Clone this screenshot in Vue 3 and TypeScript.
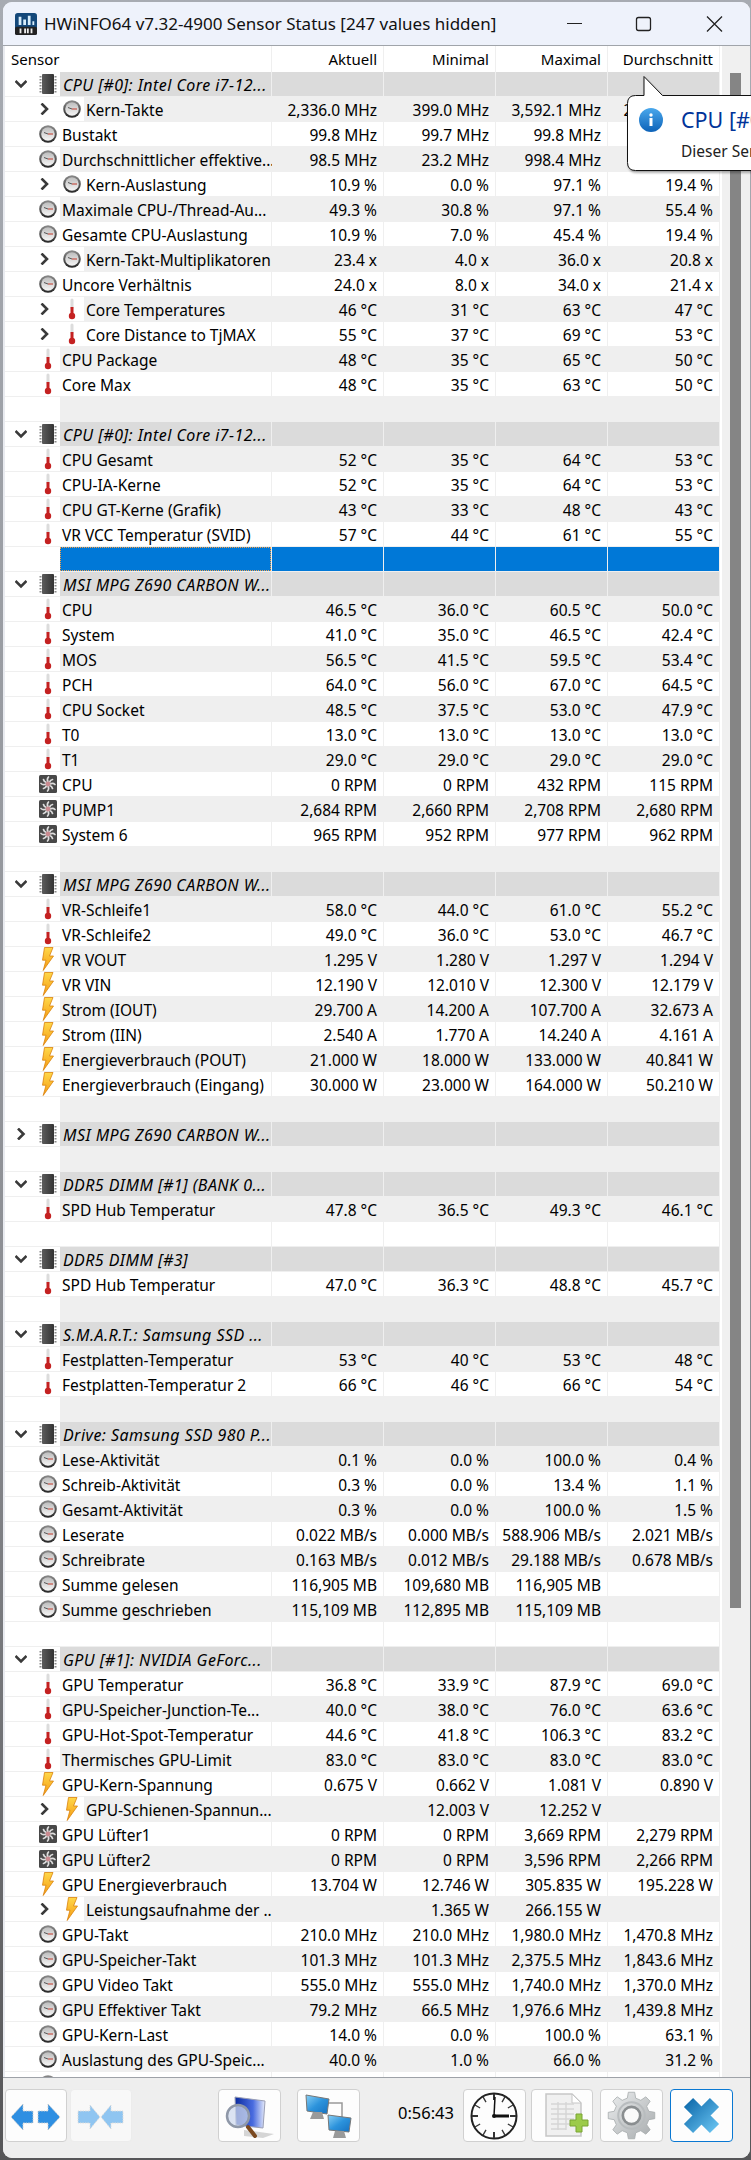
<script setup lang="ts">
type Row = { k: string; n?: string; v?: string[]; x?: boolean; c?: boolean; sel?: boolean }
const vals = (s: string) => s.split('|')
const r = (k: string, n: string, v: string, x = false): Row => ({ k, n, v: vals(v), x })
const h = (n: string, c = false): Row => ({ k: 'h', n, c })
const blank: Row = { k: '' }
const rows: Row[] = [
  h('CPU [#0]: Intel Core i7-12...'),
  r('c', 'Kern-Takte', '2,336.0 MHz|399.0 MHz|3,592.1 MHz|2,120.5 MHz', true),
  r('c', 'Bustakt', '99.8 MHz|99.7 MHz|99.8 MHz|'),
  r('c', 'Durchschnittlicher effektive...', '98.5 MHz|23.2 MHz|998.4 MHz|'),
  r('c', 'Kern-Auslastung', '10.9 %|0.0 %|97.1 %|19.4 %', true),
  r('c', 'Maximale CPU-/Thread-Au...', '49.3 %|30.8 %|97.1 %|55.4 %'),
  r('c', 'Gesamte CPU-Auslastung', '10.9 %|7.0 %|45.4 %|19.4 %'),
  r('c', 'Kern-Takt-Multiplikatoren', '23.4 x|4.0 x|36.0 x|20.8 x', true),
  r('c', 'Uncore Verhältnis', '24.0 x|8.0 x|34.0 x|21.4 x'),
  r('t', 'Core Temperatures', '46 °C|31 °C|63 °C|47 °C', true),
  r('t', 'Core Distance to TjMAX', '55 °C|37 °C|69 °C|53 °C', true),
  r('t', 'CPU Package', '48 °C|35 °C|65 °C|50 °C'),
  r('t', 'Core Max', '48 °C|35 °C|63 °C|50 °C'),
  blank,
  h('CPU [#0]: Intel Core i7-12...'),
  r('t', 'CPU Gesamt', '52 °C|35 °C|64 °C|53 °C'),
  r('t', 'CPU-IA-Kerne', '52 °C|35 °C|64 °C|53 °C'),
  r('t', 'CPU GT-Kerne (Grafik)', '43 °C|33 °C|48 °C|43 °C'),
  r('t', 'VR VCC Temperatur (SVID)', '57 °C|44 °C|61 °C|55 °C'),
  { k: '', sel: true },
  h('MSI MPG Z690 CARBON W...'),
  r('t', 'CPU', '46.5 °C|36.0 °C|60.5 °C|50.0 °C'),
  r('t', 'System', '41.0 °C|35.0 °C|46.5 °C|42.4 °C'),
  r('t', 'MOS', '56.5 °C|41.5 °C|59.5 °C|53.4 °C'),
  r('t', 'PCH', '64.0 °C|56.0 °C|67.0 °C|64.5 °C'),
  r('t', 'CPU Socket', '48.5 °C|37.5 °C|53.0 °C|47.9 °C'),
  r('t', 'T0', '13.0 °C|13.0 °C|13.0 °C|13.0 °C'),
  r('t', 'T1', '29.0 °C|29.0 °C|29.0 °C|29.0 °C'),
  r('f', 'CPU', '0 RPM|0 RPM|432 RPM|115 RPM'),
  r('f', 'PUMP1', '2,684 RPM|2,660 RPM|2,708 RPM|2,680 RPM'),
  r('f', 'System 6', '965 RPM|952 RPM|977 RPM|962 RPM'),
  blank,
  h('MSI MPG Z690 CARBON W...'),
  r('t', 'VR-Schleife1', '58.0 °C|44.0 °C|61.0 °C|55.2 °C'),
  r('t', 'VR-Schleife2', '49.0 °C|36.0 °C|53.0 °C|46.7 °C'),
  r('b', 'VR VOUT', '1.295 V|1.280 V|1.297 V|1.294 V'),
  r('b', 'VR VIN', '12.190 V|12.010 V|12.300 V|12.179 V'),
  r('b', 'Strom (IOUT)', '29.700 A|14.200 A|107.700 A|32.673 A'),
  r('b', 'Strom (IIN)', '2.540 A|1.770 A|14.240 A|4.161 A'),
  r('b', 'Energieverbrauch (POUT)', '21.000 W|18.000 W|133.000 W|40.841 W'),
  r('b', 'Energieverbrauch (Eingang)', '30.000 W|23.000 W|164.000 W|50.210 W'),
  blank,
  h('MSI MPG Z690 CARBON W...', true),
  blank,
  h('DDR5 DIMM [#1] (BANK 0...'),
  r('t', 'SPD Hub Temperatur', '47.8 °C|36.5 °C|49.3 °C|46.1 °C'),
  blank,
  h('DDR5 DIMM [#3]'),
  r('t', 'SPD Hub Temperatur', '47.0 °C|36.3 °C|48.8 °C|45.7 °C'),
  blank,
  h('S.M.A.R.T.: Samsung SSD ...'),
  r('t', 'Festplatten-Temperatur', '53 °C|40 °C|53 °C|48 °C'),
  r('t', 'Festplatten-Temperatur 2', '66 °C|46 °C|66 °C|54 °C'),
  blank,
  h('Drive: Samsung SSD 980 P...'),
  r('c', 'Lese-Aktivität', '0.1 %|0.0 %|100.0 %|0.4 %'),
  r('c', 'Schreib-Aktivität', '0.3 %|0.0 %|13.4 %|1.1 %'),
  r('c', 'Gesamt-Aktivität', '0.3 %|0.0 %|100.0 %|1.5 %'),
  r('c', 'Leserate', '0.022 MB/s|0.000 MB/s|588.906 MB/s|2.021 MB/s'),
  r('c', 'Schreibrate', '0.163 MB/s|0.012 MB/s|29.188 MB/s|0.678 MB/s'),
  r('c', 'Summe gelesen', '116,905 MB|109,680 MB|116,905 MB|'),
  r('c', 'Summe geschrieben', '115,109 MB|112,895 MB|115,109 MB|'),
  blank,
  h('GPU [#1]: NVIDIA GeForc...'),
  r('t', 'GPU Temperatur', '36.8 °C|33.9 °C|87.9 °C|69.0 °C'),
  r('t', 'GPU-Speicher-Junction-Te...', '40.0 °C|38.0 °C|76.0 °C|63.6 °C'),
  r('t', 'GPU-Hot-Spot-Temperatur', '44.6 °C|41.8 °C|106.3 °C|83.2 °C'),
  r('t', 'Thermisches GPU-Limit', '83.0 °C|83.0 °C|83.0 °C|83.0 °C'),
  r('b', 'GPU-Kern-Spannung', '0.675 V|0.662 V|1.081 V|0.890 V'),
  r('b', 'GPU-Schienen-Spannun...', '|12.003 V|12.252 V|', true),
  r('f', 'GPU Lüfter1', '0 RPM|0 RPM|3,669 RPM|2,279 RPM'),
  r('f', 'GPU Lüfter2', '0 RPM|0 RPM|3,596 RPM|2,266 RPM'),
  r('b', 'GPU Energieverbrauch', '13.704 W|12.746 W|305.835 W|195.228 W'),
  r('b', 'Leistungsaufnahme der ...', '|1.365 W|266.155 W|', true),
  r('c', 'GPU-Takt', '210.0 MHz|210.0 MHz|1,980.0 MHz|1,470.8 MHz'),
  r('c', 'GPU-Speicher-Takt', '101.3 MHz|101.3 MHz|2,375.5 MHz|1,843.6 MHz'),
  r('c', 'GPU Video Takt', '555.0 MHz|555.0 MHz|1,740.0 MHz|1,370.0 MHz'),
  r('c', 'GPU Effektiver Takt', '79.2 MHz|66.5 MHz|1,976.6 MHz|1,439.8 MHz'),
  r('c', 'GPU-Kern-Last', '14.0 %|0.0 %|100.0 %|63.1 %'),
  r('c', 'Auslastung des GPU-Speic...', '40.0 %|1.0 %|66.0 %|31.2 %'),
  r('c', '', '|||'),
]
const columns = ['Aktuell', 'Minimal', 'Maximal', 'Durchschnitt']
const empties = ['', '', '', '']

const gearPath = (() => {
  const teeth = 8
  const pts: string[] = []
  for (let i = 0; i < teeth; i++) {
    const a = (i * 2 * Math.PI) / teeth
    const step = (2 * Math.PI) / teeth
    const list: [number, number][] = [
      [17.5, a - step * 0.3],
      [23, a - step * 0.17],
      [23, a + step * 0.17],
      [17.5, a + step * 0.3],
    ]
    for (const [rad, ang] of list) {
      pts.push(`${(25 + rad * Math.cos(ang)).toFixed(1)},${(25 + rad * Math.sin(ang)).toFixed(1)}`)
    }
  }
  return 'M' + pts.join('L') + 'Z'
})()
const ticks = Array.from({ length: 12 }, (_, i) => i * 30)
</script>

<template>
  <div class="desktop">
    <svg class="defs" width="0" height="0" aria-hidden="true">
      <defs>
        <linearGradient id="g-ring" x1="0" y1="0" x2="0" y2="1">
          <stop offset="0" stop-color="#8c8c8c" /><stop offset="1" stop-color="#262626" />
        </linearGradient>
        <linearGradient id="g-face" x1="0" y1="0" x2="0" y2="1">
          <stop offset="0" stop-color="#bdbdbd" /><stop offset="1" stop-color="#f6f6f6" />
        </linearGradient>
        <linearGradient id="g-bolt" x1="0" y1="0" x2="0" y2="1">
          <stop offset="0" stop-color="#ffd84a" /><stop offset="1" stop-color="#f59a12" />
        </linearGradient>
        <linearGradient id="g-chip" x1="0" y1="0" x2="1" y2="0">
          <stop offset="0" stop-color="#5c5c5c" /><stop offset="1" stop-color="#333" />
        </linearGradient>
        <linearGradient id="g-x" x1="0" y1="0" x2="1" y2="1">
          <stop offset="0" stop-color="#1470b0" /><stop offset="1" stop-color="#62bdec" />
        </linearGradient>
        <linearGradient id="g-screen" x1="0" y1="0" x2="1" y2="0">
          <stop offset="0" stop-color="#0a2a9e" /><stop offset="0.6" stop-color="#4a6ce0" /><stop offset="1" stop-color="#e6ebfa" />
        </linearGradient>
        <linearGradient id="g-net" x1="0" y1="0" x2="1" y2="1">
          <stop offset="0" stop-color="#8ad0f5" /><stop offset="0.5" stop-color="#2c93dc" /><stop offset="1" stop-color="#1570c0" />
        </linearGradient>
        <linearGradient id="g-gear" x1="0" y1="0" x2="1" y2="1">
          <stop offset="0" stop-color="#eceeef" /><stop offset="1" stop-color="#a6aaac" />
        </linearGradient>
        <linearGradient id="g-info" x1="0" y1="0" x2="0" y2="1">
          <stop offset="0" stop-color="#4aa8ec" /><stop offset="1" stop-color="#0d62b8" />
        </linearGradient>
        <symbol id="i-c" viewBox="0 0 18 18">
          <circle cx="9" cy="9" r="8.8" fill="url(#g-ring)" />
          <circle cx="9" cy="9" r="6.8" fill="url(#g-face)" />
          <path d="M9 9H14" stroke="#c0392b" stroke-width="1" />
          <path d="M9 9L5 7.5" stroke="#555" stroke-width="1" />
        </symbol>
        <symbol id="i-h" viewBox="0 0 18 22">
          <rect x="3" y="1" width="12" height="20" rx="1" fill="url(#g-chip)" />
          <path d="M1.5 3V20M16.5 3V20" stroke="#8a8a8a" stroke-width="2" stroke-dasharray="1.5 1.5" />
        </symbol>
        <symbol id="i-t" viewBox="0 0 10 22">
          <rect x="3.5" y="0.5" width="3" height="11" rx="1.5" fill="#dcdcdc" />
          <rect x="3.5" y="9" width="3" height="8" fill="#c42121" />
          <circle cx="5" cy="18" r="3.2" fill="#c42121" />
        </symbol>
        <symbol id="i-b" viewBox="0 0 12 24">
          <path d="M2.5 .5H11L7.5 9H11.5L1.2 23.5L4 13.2H.5Z" fill="url(#g-bolt)" stroke="#d9820c" stroke-width=".8" />
        </symbol>
        <symbol id="i-f" viewBox="0 0 18 18">
          <rect width="18" height="18" rx="1.5" fill="#484848" />
          <g fill="none" stroke="#dedede" stroke-width="1.7" stroke-linecap="round">
            <path d="M9 7Q7.5 4 9.5 2M11 9Q14 7.5 16 9.5M9 11Q10.5 14 8.5 16M7 9Q4 10.5 2 8.5" />
            <path d="M10.5 7.5Q11 5 13.5 4.5M10.5 10.5Q13 11 13.5 13.5M7.5 10.5Q7 13 4.5 13.5M7.5 7.5Q5 7 4.5 4.5" />
          </g>
          <circle cx="9" cy="9" r="2.4" fill="#c98a8f" />
        </symbol>
      </defs>
    </svg>

    <div class="window">
      <header class="titlebar">
        <svg class="appicon" width="22" height="22" viewBox="0 0 24 24">
          <rect width="24" height="24" rx="3" fill="#14487a" />
          <rect y="15" width="24" height="9" rx="2" fill="#222" />
          <path d="M4 4h3v9H4zM9 7h3v6H9zM14 3h3v10h-3zM19 9h2v4h-2z" fill="#d8eefc" />
          <path d="M6 17v5M11 17v5M14 17v5M18 17v5" stroke="#eee" stroke-width="2" />
        </svg>
        <span class="title">HWiNFO64 v7.32-4900 Sensor Status [247 values hidden]</span>
        <svg class="winbtns" width="156" height="24" viewBox="0 0 156 24">
          <path d="M0 11.5H15" stroke="#222" stroke-width="1.2" />
          <rect x="69.5" y="5.5" width="14" height="13" rx="2" fill="none" stroke="#222" stroke-width="1.3" />
          <path d="M140 4.5L155 19.5M155 4.5L140 19.5" stroke="#222" stroke-width="1.3" />
        </svg>
      </header>

      <div class="body">
        <div class="list">
          <div class="row head">
            <div class="cell name-cell">Sensor</div>
            <div v-for="c in columns" :key="c" class="cell num">{{ c }}</div>
          </div>
          <div
            v-for="(row, i) in rows"
            :key="i"
            class="row"
            :class="{ odd: i % 2 === 1, group: row.k === 'h', sel: row.sel }"
          >
            <div class="cell first">
              <div class="gutter" :class="{ wide: row.x }">
                <svg v-if="row.k === 'h'" class="chev" width="12" height="12" viewBox="0 0 12 12">
                  <path v-if="row.c" d="M3 .5L8.5 6L3 11.5" fill="none" stroke="#3a3a3a" stroke-width="2.6" />
                  <path v-else d="M.5 3L6 8.5L11.5 3" fill="none" stroke="#3a3a3a" stroke-width="2.6" />
                </svg>
                <svg v-if="row.x" class="sub" width="10" height="12" viewBox="0 0 10 12">
                  <path d="M1.5 .5L7 6L1.5 11.5" fill="none" stroke="#3a3a3a" stroke-width="2.6" />
                </svg>
                <svg v-if="row.k === 'h'" class="ico chip" width="18" height="22"><use href="#i-h" /></svg>
                <svg v-else-if="row.k === 'c'" class="ico" width="18" height="18"><use href="#i-c" /></svg>
                <svg v-else-if="row.k === 't'" class="ico therm" width="10" height="22"><use href="#i-t" /></svg>
                <svg v-else-if="row.k === 'b'" class="ico bolt" width="12" height="24"><use href="#i-b" /></svg>
                <svg v-else-if="row.k === 'f'" class="ico" width="18" height="18"><use href="#i-f" /></svg>
              </div>
              <div class="label" :class="{ it: row.k === 'h' }">{{ row.n }}</div>
            </div>
            <div v-for="(v, j) in row.v ?? empties" :key="j" class="cell num">{{ v }}</div>
          </div>
        </div>
        <div class="scroll"><div class="thumb"></div></div>
      </div>

      <footer class="toolbar">
        <button class="tb w62">
          <svg width="60" height="51" viewBox="0 0 60 51">
            <path d="M5 27L17 14V21H27V33H17V40Z" fill="#2e8fe2" stroke="#cfcfcf" stroke-width="1" stroke-dasharray="1.5 1" />
            <path d="M54 27L42 14V21H32V33H42V40Z" fill="#2e8fe2" stroke="#cfcfcf" stroke-width="1" stroke-dasharray="1.5 1" />
          </svg>
        </button>
        <button class="tb w62 off">
          <svg width="60" height="51" viewBox="0 0 60 51">
            <path d="M29 27L19 15V21H7V33H19V39Z" fill="#8fc5f1" stroke="#ddd" stroke-width="1" stroke-dasharray="1.5 1" />
            <path d="M30 27L40 15V21H52V33H40V39Z" fill="#8fc5f1" stroke="#ddd" stroke-width="1" stroke-dasharray="1.5 1" />
          </svg>
        </button>
        <button class="tb w63 m87">
          <svg width="61" height="51" viewBox="0 0 61 51">
            <path d="M25 40L55 44L44 48L25 46Z" fill="#bbb" opacity=".6" />
            <path d="M16 7L46 11L44 38L17 35Z" fill="url(#g-screen)" stroke="#9a9fb5" />
            <circle cx="19" cy="26" r="11" fill="#cfd9ee" fill-opacity=".75" stroke="#8f98a8" stroke-width="2.5" />
            <path d="M29 37L36 46" stroke="#7b4a20" stroke-width="4" stroke-linecap="round" />
          </svg>
        </button>
        <button class="tb w63 m16">
          <svg width="61" height="51" viewBox="0 0 61 51">
            <path d="M28 13H44V28" fill="none" stroke="#999" stroke-width="1.5" />
            <path d="M8 5L31 9L29 24L9 21Z" fill="url(#g-net)" stroke="#777" />
            <path d="M15 22H24L26 29H12Z" fill="#9a9a9a" />
            <path d="M30 25L53 28L51 42L31 40Z" fill="url(#g-net)" stroke="#777" />
            <path d="M37 41H46L48 48H35Z" fill="#9a9a9a" />
          </svg>
        </button>
        <span class="time">0:56:43</span>
        <button class="tb w63">
          <svg width="61" height="51" viewBox="0 0 61 51">
            <circle cx="30" cy="26" r="22.5" fill="#fdfdfd" stroke="#222" stroke-width="2" />
            <g v-for="t in ticks" :key="t" :transform="`rotate(${t} 30 26)`">
              <path d="M30 4V10" stroke="#333" :stroke-width="t % 90 === 0 ? 2 : 1.3" />
            </g>
            <path d="M30 26L31 7" stroke="#111" stroke-width="1.5" />
            <path d="M30 26H45" stroke="#111" stroke-width="3" />
            <circle cx="30" cy="26" r="2" fill="#111" />
          </svg>
        </button>
        <button class="tb w62 m5">
          <svg width="60" height="51" viewBox="0 0 60 51">
            <path d="M14 4H40L49 13V46H14Z" fill="#f0f0f0" stroke="#c6c6c6" stroke-width="1.5" />
            <path d="M40 4V13H49Z" fill="#fff" stroke="#c6c6c6" />
            <path d="M19 14H42M19 19H42M19 24H42M19 29H42M19 34H38M19 39H34M26 12V40M34 12V40" stroke="#d5d5d5" stroke-width="1.4" />
            <path d="M38 30h6v-6h6v6h6v6h-6v6h-6v-6h-6z" fill="#9ccb4a" stroke="#7ba534" stroke-width="1" />
          </svg>
        </button>
        <button class="tb w63 m7">
          <svg width="61" height="51" viewBox="0 0 50 50">
            <path :d="gearPath" fill="url(#g-gear)" stroke="#a8acae" stroke-width=".8" />
            <circle cx="25" cy="25" r="13" fill="none" stroke="#b8bcbe" stroke-width="2" />
            <circle cx="25" cy="25" r="8.5" fill="#fafafa" stroke="#8a8e90" stroke-width="2.6" />
          </svg>
        </button>
        <button class="tb w63 m7 focus">
          <svg width="61" height="51" viewBox="0 0 61 51">
            <path d="M17.5 12.5L43.5 38.5M43.5 12.5L17.5 38.5" fill="none" stroke="url(#g-x)" stroke-width="13" />
          </svg>
        </button>
      </footer>
    </div>

    <div class="tip">
      <svg class="tipshape" width="130" height="97" viewBox="0 0 130 97">
        <path d="M18 .5L36.5 19.5H129.5V94.5H9.5Q1.5 94.5 1.5 86.5V27.5Q1.5 19.5 9.5 19.5H18Z" fill="#fff" stroke="#111" stroke-width="1" />
      </svg>
      <svg class="tipinfo" width="24" height="24" viewBox="0 0 24 24">
        <circle cx="12" cy="12" r="12" fill="url(#g-info)" />
        <rect x="10.5" y="10" width="3" height="8" fill="#fff" />
        <circle cx="12" cy="7" r="1.7" fill="#fff" />
      </svg>
      <div class="tiphead">CPU [#0]: Intel Core i7-12700K</div>
      <div class="tiptext">Dieser Sensor wird überwacht</div>
    </div>
  </div>
</template>

<style scoped>
.desktop {
  position: relative;
  width: 751px;
  height: 2160px;
  box-sizing: border-box;
  padding: 2px 1px 2px 3px;
  background: linear-gradient(#a7abb2, #8d8f94 60%, #565658);
  font-family: "Noto Sans", "Open Sans", sans-serif;
  font-size: 15.5px;
  color: #000;
  overflow: hidden;
}
.defs { position: absolute; }
.window {
  height: 2156px;
  display: flex;
  flex-direction: column;
  border-radius: 9px;
  overflow: hidden;
  background: #eeeeee;
}
.titlebar {
  height: 43px;
  flex: none;
  display: flex;
  align-items: center;
  background: #eef2fb;
  padding-left: 12px;
}
.appicon { flex: none; }
.title { margin-left: 7px; font-size: 17px; white-space: nowrap; color: #111; flex: 1; }
.winbtns { margin-right: 27px; flex: none; }
.body {
  height: 2031px;
  flex: none;
  display: flex;
  border-top: 1px solid #a0a4aa;
  background: #e9ebf0;
  padding-left: 2px;
}
.list {
  width: 717px;
  flex: none;
  overflow: hidden;
  background: #fff;
}
.scroll {
  flex: 1;
  background: #f0f0f0;
  padding: 27px 9px 0 8px;
}
.thumb { height: 1535px; background: #858585; }
.row {
  display: grid;
  grid-template-columns: 267px repeat(4, 112px);
  height: 25px;
  box-sizing: border-box;
  line-height: 26px;
  white-space: nowrap;
}
.cell {
  border-right: 1px solid #efefef;
  border-bottom: 1px solid #efefef;
  box-sizing: border-box;
  height: 25px;
}
.row.head { height: 26px; font-size: 15px; }
.row.head .cell { height: 26px; border-bottom: 0; line-height: 27px; }
.name-cell { padding-left: 6px; }
.first { display: flex; }
.num { text-align: right; padding-right: 6px; }
.row.odd .num, .row.odd .label { background: #efefef; }
.row.group .num, .row.group .label { background: #dbdbdb; }
.row.sel .num, .row.sel .label { background: #0078d7; }
.row.sel .label { outline: 1px dotted #f2a14a; outline-offset: -1px; }
.gutter {
  width: 55px;
  flex: none;
  position: relative;
  background: #fff;
}
.gutter.wide { width: 79px; }
.label { flex: 1; padding-left: 2px; min-width: 0; height: 24px; }
.label.it { font-style: italic; padding-left: 3px; font-size: 16px; letter-spacing: .45px; }
.chev { position: absolute; left: 10px; top: 6px; }
.sub { position: absolute; left: 35px; top: 6px; }
.ico { position: absolute; left: 34px; top: 3px; }
.therm { left: 38px; top: 1px; }
.bolt { left: 37px; top: 0; }
.chip { left: 34px; top: 1px; }
.gutter.wide .ico { left: 58px; }
.gutter.wide .therm { left: 62px; }
.gutter.wide .bolt { left: 61px; }
.tip {
  position: absolute;
  left: 625.5px;
  top: 76px;
  width: 130px;
  height: 97px;
  white-space: nowrap;
}
.tipshape { position: absolute; left: 0; top: 0; filter: drop-shadow(1px 2px 1px rgba(0, 0, 0, .3)); }
.tipinfo { position: absolute; left: 13.5px; top: 32px; }
.tiphead { position: absolute; left: 55.5px; top: 30px; font-size: 21.5px; line-height: 28px; color: #003399; }
.tiptext { position: absolute; left: 55.5px; top: 63px; font-size: 15.5px; line-height: 24px; color: #222; }
.toolbar {
  height: 81px;
  flex: none;
  box-sizing: border-box;
  border-top: 1px solid #9ea2a8;
  padding: 11px 0 0 2px;
  display: flex;
  align-items: flex-start;
  gap: 3px;
  background: #eeeeee;
}
.tb {
  height: 53px;
  padding: 0;
  margin: 0;
  flex: none;
  display: flex;
  align-items: center;
  justify-content: center;
  background: #fdfdfd;
  border: 1px solid #d0d0d0;
  border-radius: 4px;
}
.w62 { width: 62px; }
.w63 { width: 63px; }
.off { background: #f8f8f8; border-color: #ececec; }
.m87 { margin-left: 83px; }
.m16 { margin-left: 13px; }
.m5 { margin-left: 2px; }
.m7 { margin-left: 4px; }
.focus { border-color: #0a78d2; }
.time { width: 97px; text-align: right; padding-right: 6px; box-sizing: border-box; line-height: 48px; font-size: 16.5px; }
</style>

<style>
html, body { margin: 0; background: #8d8f94; }
</style>
